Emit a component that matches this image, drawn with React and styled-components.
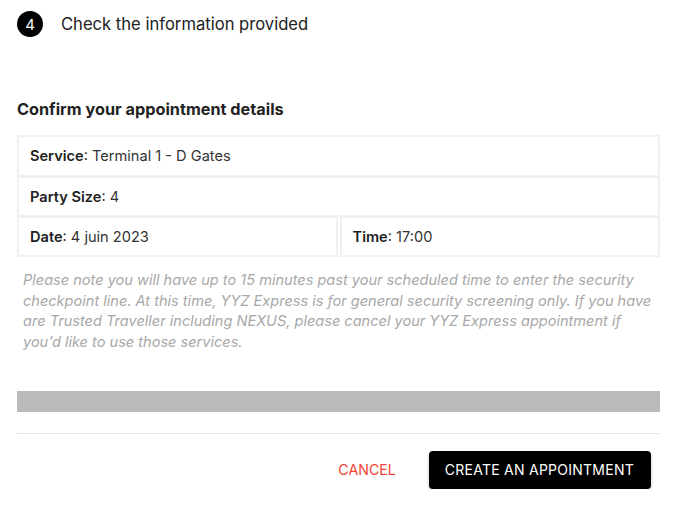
import React from "react";
import styled, { createGlobalStyle } from "styled-components";

const Global = createGlobalStyle`
  html, body { margin: 0; padding: 0; background: #fff; }
  body { font-family: Inter, "Noto Sans", sans-serif; color: #222; }
  * { box-sizing: border-box; }
`;

const Page = styled.div`
  width: 675px;
  padding: 11px 15px 0 17px;
`;

const Step = styled.div`
  display: flex;
  align-items: center;
  gap: 18px;
  height: 26px;
`;

const StepNum = styled.div`
  width: 26px;
  height: 26px;
  border-radius: 50%;
  background: #000;
  color: #fff;
  font-size: 15px;
  display: flex;
  align-items: center;
  justify-content: center;
`;

const StepTitle = styled.div`
  font-size: 16.6px;
  color: #222;
`;

const Heading = styled.h2`
  margin: 62px 0 0;
  font-size: 16.25px;
  font-weight: 700;
  line-height: 20px;
  color: #222;
`;

const Details = styled.div`
  margin-top: 16px;
  display: flex;
  flex-direction: column;
`;

const Row = styled.div`
  display: flex;
  gap: 2px;
`;

const Cell = styled.div`
  flex: 1;
  height: ${(p) => p.$h || 41}px;
  border: 2px solid #f0f0f0;
  margin-top: ${(p) => (p.$first ? 0 : -1)}px;
  padding: 0 11px;
  display: flex;
  align-items: center;
  font-size: 14.6px;
  color: #333;
  white-space: pre;
`;

const Label = styled.b`
  font-weight: 600;
  color: #222;
`;

const Note = styled.p`
  margin: 13px 0 0 6px;
  font-size: 14.55px;
  line-height: 20.7px;
  font-style: italic;
  color: #a8a8a8;
`;

const Bar = styled.div`
  margin-top: 38px;
  height: 21px;
  background: #bbbbbb;
`;

const Divider = styled.hr`
  margin: 21px 0 0;
  border: 0;
  border-top: 1px solid #e2e2e2;
`;

const Actions = styled.div`
  display: flex;
  justify-content: flex-end;
  align-items: center;
  gap: 33px;
  margin-top: 17px;
  padding-right: 9px;
`;

const CancelBtn = styled.button`
  background: none;
  border: 0;
  padding: 0;
  font-family: inherit;
  font-size: 14.2px;
  color: #f44336;
  text-transform: uppercase;
  cursor: pointer;
`;

const PrimaryBtn = styled.button`
  height: 38px;
  padding: 0 17px 0 16px;
  background: #000;
  color: #fff;
  border: 0;
  border-radius: 4px;
  font-family: inherit;
  font-size: 14px;
  letter-spacing: 0.25px;
  text-transform: uppercase;
  box-shadow: 0 2px 3px rgba(0, 0, 0, 0.25);
  cursor: pointer;
`;

export default function App() {
  return (
    <Page>
      <Global />
      <Step>
        <StepNum>4</StepNum>
        <StepTitle>Check the information provided</StepTitle>
      </Step>
      <Heading>Confirm your appointment details</Heading>
      <Details>
        <Row>
          <Cell $first $h={42}>
            <Label>Service</Label>: Terminal 1 - D Gates
          </Cell>
        </Row>
        <Row>
          <Cell>
            <Label>Party Size</Label>: 4
          </Cell>
        </Row>
        <Row>
          <Cell>
            <Label>Date</Label>: 4 juin 2023
          </Cell>
          <Cell>
            <Label>Time</Label>: 17:00
          </Cell>
        </Row>
      </Details>
      <Note>
        Please note you will have up to 15 minutes past your scheduled time to enter the security
        checkpoint line. At this time, YYZ Express is for general security screening only. If you have
        are Trusted Traveller including NEXUS, please cancel your YYZ Express appointment if
        you’d like to use those services.
      </Note>
      <Bar />
      <Divider />
      <Actions>
        <CancelBtn>Cancel</CancelBtn>
        <PrimaryBtn>Create an appointment</PrimaryBtn>
      </Actions>
    </Page>
  );
}
